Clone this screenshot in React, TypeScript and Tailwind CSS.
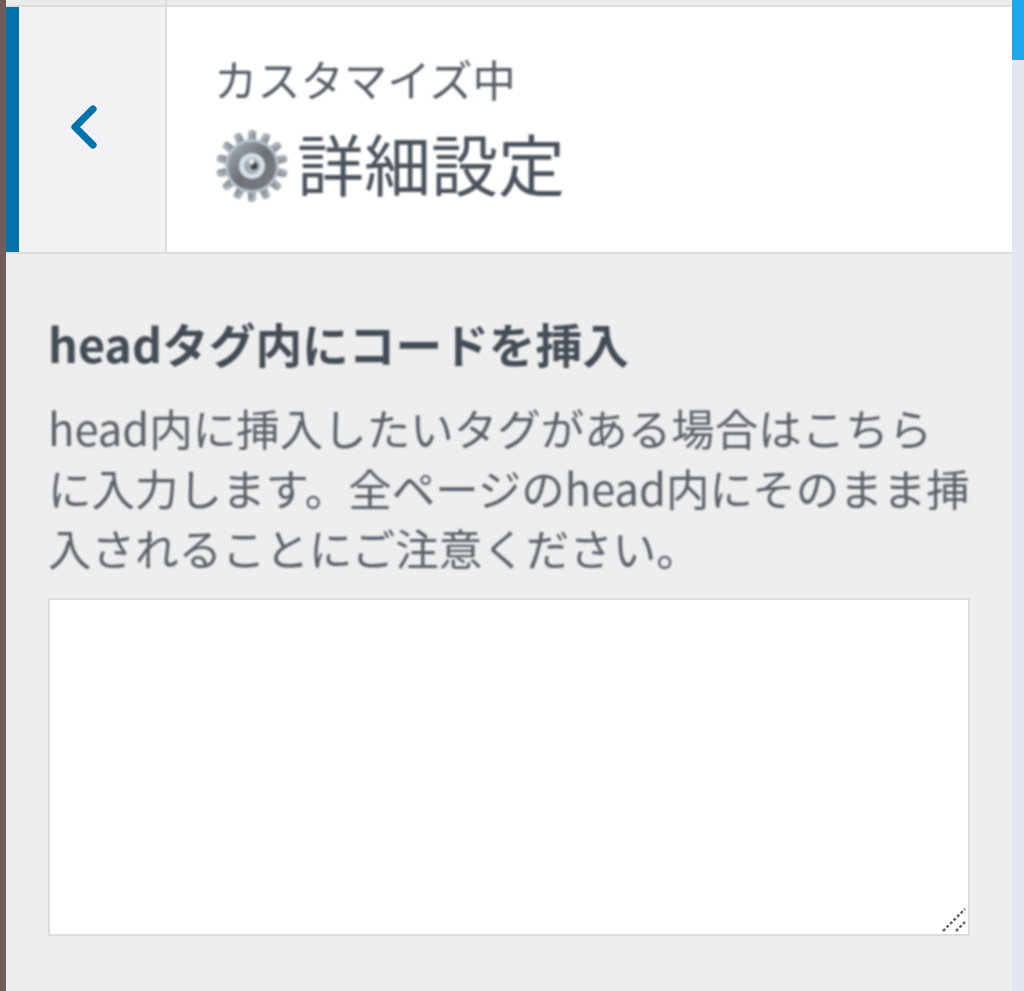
import { ChevronLeft } from "lucide-react";

const jp = { fontFamily: '"Noto Sans CJK JP", "Noto Sans", sans-serif' };

function Gear() {
  const teeth = Array.from({ length: 14 }, (_, i) => (i * 360) / 14);
  return (
    <svg width="74" height="74" viewBox="0 0 74 74" className="shrink-0 mt-[8px]">
      <defs>
        <linearGradient id="ring" x1="0" y1="0" x2="1" y2="1">
          <stop offset="0" stopColor="#a9b1b9" />
          <stop offset="0.5" stopColor="#6d7176" />
          <stop offset="1" stopColor="#7d8084" />
        </linearGradient>
        <linearGradient id="tooth" x1="0" y1="0" x2="1" y2="1">
          <stop offset="0" stopColor="#b9cad8" />
          <stop offset="1" stopColor="#77716f" />
        </linearGradient>
      </defs>
      {teeth.map((a) => (
        <rect key={a} x="33" y="1" width="8" height="14" rx="3" fill="url(#tooth)" transform={`rotate(${a} 37 37)`} />
      ))}
      <circle cx="37" cy="37" r="27" fill="#b4c1cc" />
      <circle cx="37" cy="37" r="24" fill="url(#ring)" />
      <circle cx="37" cy="37" r="13" fill="#d4dfe8" />
      <circle cx="37" cy="37" r="8" fill="#a3aeb8" />
      <circle cx="39" cy="37" r="3.5" fill="#3d3a38" />
      <path d="M33 32a7 7 0 0 1 6-2l-1 7z" fill="#eef3f7" />
    </svg>
  );
}

export default function App() {
  return (
    <div className="flex w-[1024px] h-[991px] overflow-hidden bg-[#eeeeee]" style={jp}>
      <div className="w-[6px] shrink-0 bg-[#6e5d5b]" />

      <div className="flex-1 flex flex-col min-w-0">
        <div className="h-[7px] shrink-0 bg-[#ececec] border-b-2 border-[#dddddd] pl-[159px]">
          <div className="w-[2px] h-full bg-[#dddddd]" />
        </div>

        <div className="h-[247px] shrink-0 flex bg-white border-b-2 border-[#dddddd]">
          <div className="w-[161px] shrink-0 flex items-center bg-[#f2f2f5] border-l-[13px] border-[#0073aa] border-r-2 border-r-[#dddddd]">
            <ChevronLeft size={72} strokeWidth={2.4} className="ml-[29px] mb-[6px] text-[#0073aa] blur-[0.5px]" />
          </div>
          <div className="flex-1 pl-[47px] pt-[41px] blur-[0.8px]">
            <div className="text-[43.3px] leading-[60px] text-[#555d66]">カスタマイズ中</div>
            <div className="flex items-center ml-[1px] mt-[13px]">
              <Gear />
              <span className="text-[67px] leading-[80px] text-[#4a535c] ml-[8px]">詳細設定</span>
            </div>
          </div>
        </div>

        <div className="flex-1 pl-[42px] pr-[42px] pt-[59px]">
          <h2 className="text-[46.7px] leading-[60px] font-bold text-[#444d56] blur-[0.8px]">headタグ内にコードを挿入</h2>
          <p className="mt-[25px] text-[43.5px] leading-[60px] text-[#5a6168] blur-[0.8px]">
            head内に挿入したいタグがある場合はこちらに入力します。全ページのhead内にそのまま挿入されることにご注意ください。
          </p>
          <div className="relative mt-[20px] h-[338px] blur-[0.5px]">
            <textarea className="block w-full h-full resize-none bg-white border-2 border-[#dddddd] outline-none" />
            <svg width="28" height="28" viewBox="0 0 28 28" className="absolute right-[2px] bottom-[2px]">
              <path d="M3 25 25 3" stroke="#666" strokeWidth="2.5" strokeDasharray="3 2" />
              <path d="M16 25 25 16" stroke="#666" strokeWidth="2.5" strokeDasharray="3 2" />
            </svg>
          </div>
        </div>
      </div>

      <div className="w-[12px] shrink-0 bg-[#e3e7ee]">
        <div className="h-[60px] bg-[#1ba8ec]" />
      </div>
    </div>
  );
}
